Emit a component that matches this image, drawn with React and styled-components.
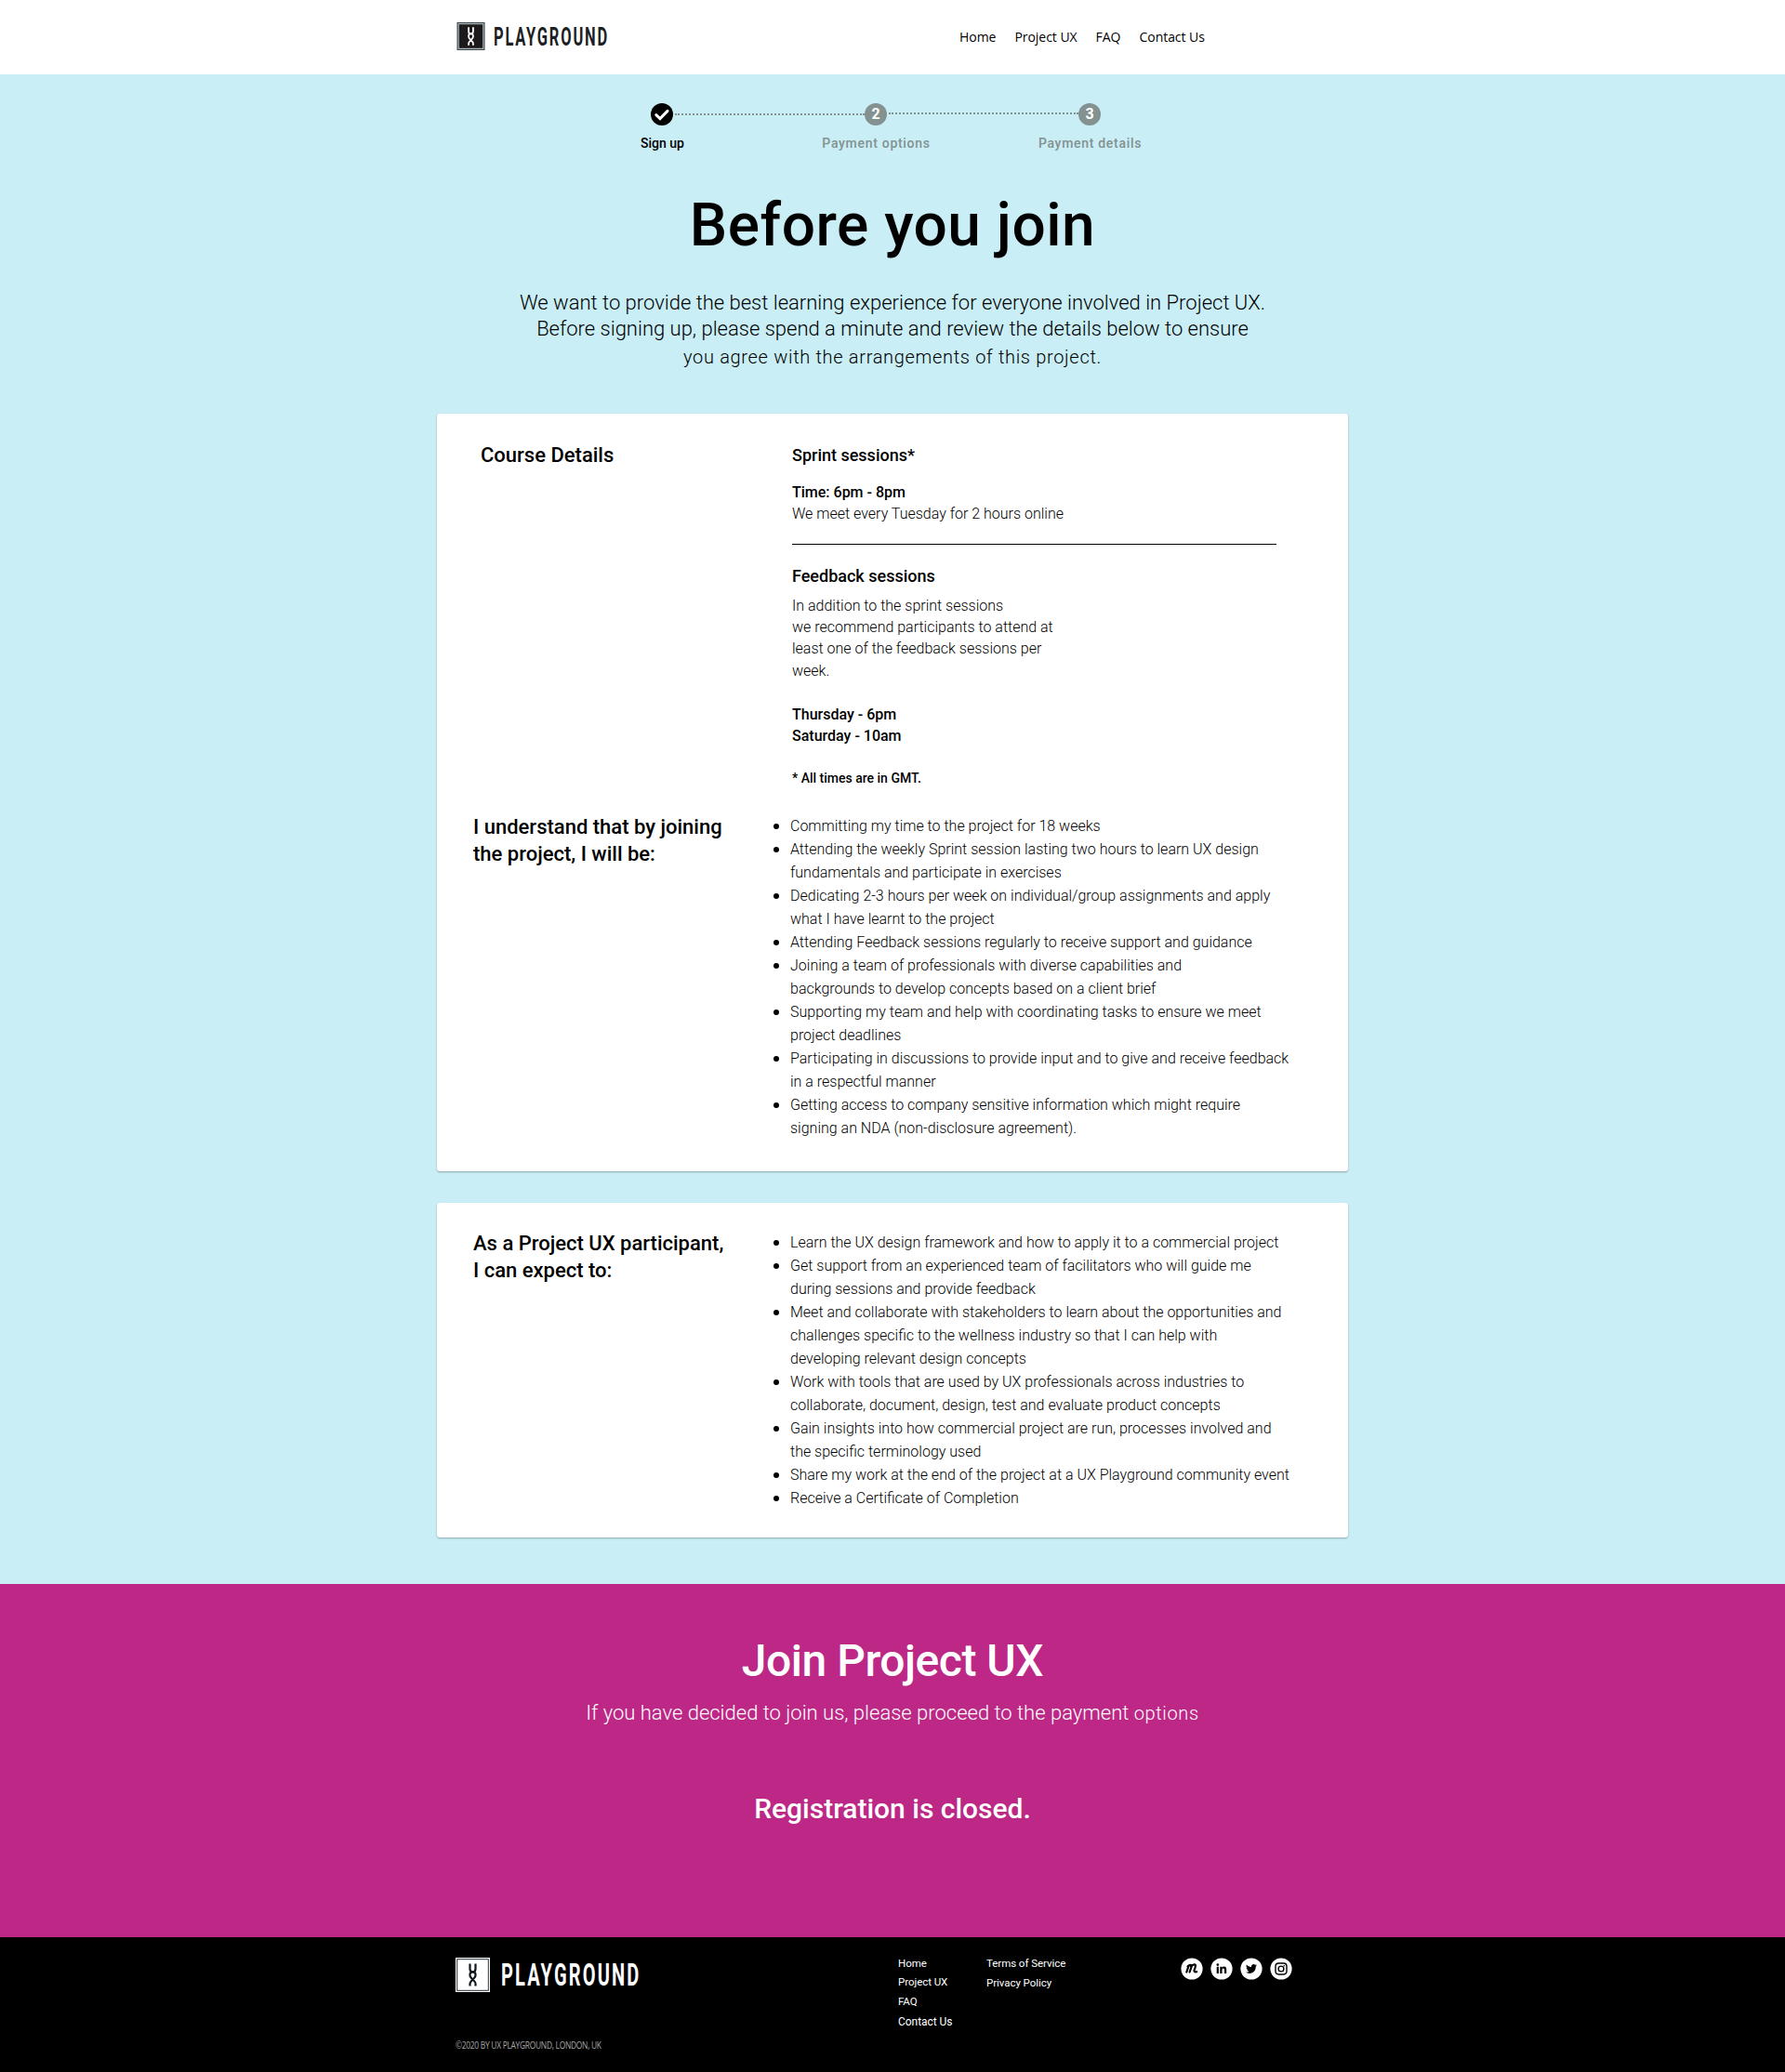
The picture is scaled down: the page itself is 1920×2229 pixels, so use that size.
import React from "react";
import styled, { createGlobalStyle } from "styled-components";

const Global = createGlobalStyle`
  *, *::before, *::after { box-sizing: border-box; }
  body { margin: 0; background: #fff; color: #000; font-family: Roboto, "Liberation Sans", sans-serif; }
  h1, h2, h3, p, ul { margin: 0; padding: 0; font-weight: inherit; }
  a { color: inherit; text-decoration: none; }
`;

const Header = styled.header`
  height: 80px;
  padding-left: 490px;
  display: flex;
  align-items: flex-start;
  background: #fff;
`;
const LogoSvg = styled.svg`
  display: block;
  flex: none;
`;
const HeaderLogo = styled.div`
  width: 542px;
  padding-top: 23px;
`;
const Nav = styled.nav`
  display: flex;
  gap: 20px;
  padding-top: 30px;
  font: 400 14px/20px "Open Sans", "Noto Sans", sans-serif;
  letter-spacing: -0.04px;
  white-space: nowrap;
`;

const Main = styled.main`
  height: 1624px;
  background: #c9eef6;
  display: flex;
  flex-direction: column;
  align-items: center;
  padding-top: 31px;
`;
const Track = styled.div`
  display: flex;
  width: 484px;
  margin-left: -36px;
`;
const Dot = styled.div`
  width: 24px;
  height: 24px;
  border-radius: 50%;
  background: ${(p) => (p.$done ? "#000" : "#839190")};
  color: #fff;
  font-size: 16px;
  line-height: 24px;
  font-weight: 700;
  text-align: center;
`;
const Dots = styled.div`
  width: 204px;
  height: 2px;
  margin: ${(p) => p.$top}px 0 0 2px;
  border-top: 2px dotted #839190;
`;
const Labels = styled.div`
  display: grid;
  grid-template-columns: repeat(3, 230px);
  margin: 9px 0 0 -35px;
`;
const Label = styled.div`
  text-align: center;
  font-size: 14px;
  font-weight: 500;
  line-height: 20px;
  letter-spacing: ${(p) => (p.$active ? 0 : 0.7)}px;
  color: ${(p) => (p.$active ? "#000" : "#839190")};
`;
const Title = styled.h1`
  margin-top: 39px;
  font-size: 64px;
  line-height: 80px;
  font-weight: 500;
  letter-spacing: 0.5px;
`;
const Intro = styled.p`
  margin-top: 29px;
  height: 133px;
  text-align: center;
  font-size: 22px;
  line-height: 28px;
  font-weight: 300;
  white-space: nowrap;
`;
const IntroTail = styled.span`
  display: block;
  margin-top: 1px;
  font-size: 20px;
  line-height: 30px;
  letter-spacing: 0.68px;
`;

const Card = styled.section`
  width: 980px;
  height: ${(p) => p.$h}px;
  margin-bottom: 34px;
  background: #fff;
  border-radius: 3px;
  box-shadow: 0 1px 2px rgba(0, 0, 0, 0.3);
`;
const Details = styled.div`
  display: grid;
  grid-template-columns: 335px 1fr;
  padding: 29px 0 0 47px;
  height: 430px;
`;
const CardHeading = styled.h2`
  padding-top: ${(p) => p.$pt || 0}px;
  font-size: 22px;
  line-height: 29px;
  font-weight: 500;
  white-space: nowrap;
`;
const DetailColumn = styled.div`
  padding-top: 4px;
`;
const SubHeading = styled.h3`
  font-size: 18px;
  line-height: 24px;
  font-weight: 500;
`;
const Strong = styled.p`
  margin-top: ${(p) => p.$mt}px;
  font-size: ${(p) => p.$size || 16}px;
  line-height: ${(p) => p.$lh || 23}px;
  font-weight: 500;
`;
const Body = styled.p`
  margin-top: ${(p) => p.$mt || 0}px;
  font-size: 16px;
  line-height: 23px;
  font-weight: 300;
`;
const Divider = styled.div`
  width: 521px;
  height: 1px;
  margin: 21px 0 22px;
  background: #000;
`;
const Terms = styled.div`
  display: grid;
  grid-template-columns: 323px 1fr;
  padding: ${(p) => p.$pt || 0}px 0 0 39px;
`;
const List = styled.ul`
  list-style: none;
  padding-top: 1px;
`;
const Item = styled.li`
  display: flex;
  gap: 12px;
  font-size: 16px;
  line-height: 25px;
  font-weight: 300;
  white-space: nowrap;
  &::before {
    content: "";
    flex: none;
    width: 6px;
    height: 6px;
    margin-top: 10px;
    border-radius: 50%;
    background: #000;
  }
`;

const Join = styled.section`
  height: 380px;
  padding-top: 53px;
  background: #bd2786;
  color: #fff;
  text-align: center;
`;
const JoinTitle = styled.h2`
  font-size: 48px;
  line-height: 60px;
  font-weight: 500;
  letter-spacing: -0.48px;
`;
const JoinText = styled.p`
  margin-top: 11px;
  font-size: 22px;
  line-height: 30px;
  font-weight: 300;
`;
const JoinTail = styled.span`
  font-size: 20px;
  letter-spacing: 0.65px;
`;
const Closed = styled.p`
  margin-top: 68px;
  font-size: 30px;
  line-height: 40px;
  font-weight: 500;
`;

const Footer = styled.footer`
  height: 145px;
  background: #000;
  color: #fff;
  display: flex;
  align-items: flex-start;
  padding: 22px 0 0 490px;
`;
const Brand = styled.div`
  width: 476px;
`;
const Copyright = styled.p`
  margin-top: 48px;
  font: 400 10px/16px "Open Sans", "Noto Sans", sans-serif;
  letter-spacing: -0.3px;
  color: #a9a9a9;
  transform: scaleX(0.837);
  transform-origin: left;
`;
const Links = styled.div`
  width: ${(p) => p.$w}px;
  display: flex;
  flex-direction: column;
`;
const FootLink = styled.a`
  font-size: ${(p) => p.$size || 11.5}px;
  line-height: 20px;
  letter-spacing: -0.05px;
  white-space: nowrap;
  margin-top: ${(p) => p.$mt || 0}px;
`;
const Social = styled.div`
  display: flex;
  gap: 8px;
`;

function Logo({ width, height, box, inner, mark, text, word }) {
  const s = box.size;
  return (
    <LogoSvg width={width} height={height} viewBox={`0 0 ${width} ${height}`}>
      <rect x={box.x} y={box.y} width={s} height={s} fill={box.outer} />
      <rect x={box.x + 1.2} y={box.y + 1.2} width={s - 2.4} height={s - 2.4} fill={inner.line} />
      <rect x={box.x + 2.2} y={box.y + 2.2} width={s - 4.4} height={s - 4.4} fill={inner.fill} />
      <g
        transform={`translate(${box.x + s / 2} ${box.y + s / 2}) scale(${s / 37})`}
        fill="none"
        stroke={mark}
        strokeWidth="2.2"
      >
        <path d="M-3 -12V-6.5Q-3 -3.2 0 -3.2T3 -6.5V-12" />
        <path d="M-3 12V9.5Q-3 7.8 0 5T3 .5V-.5Q3 -3.2 0 -3.2T-3 -.5V.5Q-3 2.2 0 5T3 9.5V12" />
      </g>
      <text
        x={word.x}
        y={word.y}
        fill={text}
        fontFamily="Roboto, sans-serif"
        fontWeight="700"
        fontSize={word.size}
        letterSpacing={word.size * 0.11}
        transform={`translate(${word.x} 0) scale(${word.scale} 1) translate(${-word.x} 0)`}
      >
        PLAYGROUND
      </text>
    </LogoSvg>
  );
}

const lines = (text) =>
  text.split("|").map((part, i) => (
    <React.Fragment key={i}>
      {i > 0 && <br />}
      {part}
    </React.Fragment>
  ));

const commitments = [
  "Committing my time to the project for 18 weeks",
  "Attending the weekly Sprint session lasting two hours to learn UX design|fundamentals and participate in exercises",
  "Dedicating 2-3 hours per week on individual/group assignments and apply|what I have learnt to the project",
  "Attending Feedback sessions regularly to receive support and guidance",
  "Joining a team of professionals with diverse capabilities and|backgrounds to develop concepts based on a client brief",
  "Supporting my team and help with coordinating tasks to ensure we meet|project deadlines",
  "Participating in discussions to provide input and to give and receive feedback|in a respectful manner",
  "Getting access to company sensitive information which might require|signing an NDA (non-disclosure agreement).",
];
const expectations = [
  "Learn the UX design framework and how to apply it to a commercial project",
  "Get support from an experienced team of facilitators who will guide me|during sessions and provide feedback",
  "Meet and collaborate with stakeholders to learn about the opportunities and|challenges specific to the wellness industry so that I can help with|developing relevant design concepts",
  "Work with tools that are used by UX professionals across industries to|collaborate, document, design, test and evaluate product concepts",
  "Gain insights into how commercial project are run, processes involved and|the specific terminology used",
  "Share my work at the end of the project at a UX Playground community event",
  "Receive a Certificate of Completion",
];

const Bullets = ({ items }) => (
  <List>
    {items.map((t) => (
      <Item key={t}>
        <span>{lines(t)}</span>
      </Item>
    ))}
  </List>
);

const Badge = ({ children }) => (
  <svg width="24" height="24" viewBox="0 0 24 24">
    <circle cx="12" cy="12" r="11.6" fill="#fff" />
    {children}
  </svg>
);

export default function App() {
  return (
    <>
      <Global />
      <Header>
        <HeaderLogo>
          <Logo
            width={180}
            height={34}
            box={{ x: 1.5, y: 1, size: 30, outer: "#3b444b" }}
            inner={{ line: "#c5d0d4", fill: "#1c1a1a" }}
            mark="#fff"
            text="#1c2023"
            word={{ x: 41, y: 26, size: 28, scale: 0.588 }}
          />
        </HeaderLogo>
        <Nav>
          <a>Home</a>
          <a>Project UX</a>
          <a>FAQ</a>
          <a>Contact Us</a>
        </Nav>
      </Header>
      <Main>
        <Track>
          <Dot $done>
            <svg width="24" height="24" viewBox="0 0 24 24">
              <path d="M5.8 12.6L10 16.6L18 8.4" fill="none" stroke="#fff" strokeWidth="3" strokeLinecap="round" />
            </svg>
          </Dot>
          <Dots $top={11} />
          <Dot>2</Dot>
          <Dots $top={10} />
          <Dot>3</Dot>
        </Track>
        <Labels>
          <Label $active>Sign up</Label>
          <Label>Payment options</Label>
          <Label>Payment details</Label>
        </Labels>
        <Title>Before you join</Title>
        <Intro>
          We want to provide the best learning experience for everyone involved in Project UX.
          <br />
          Before signing up, please spend a minute and review the details below to ensure
          <IntroTail>you agree with the arrangements of this project.</IntroTail>
        </Intro>
        <Card $h={815}>
          <Details>
            <CardHeading $pt={1}>Course Details</CardHeading>
            <DetailColumn>
              <SubHeading>Sprint sessions*</SubHeading>
              <Strong $mt={16}>Time: 6pm - 8pm</Strong>
              <Body>We meet every Tuesday for 2 hours online</Body>
              <Divider />
              <SubHeading>Feedback sessions</SubHeading>
              <Body $mt={8}>
                {lines("In addition to the sprint sessions|we recommend participants to attend at|least one of the feedback sessions per")}
              </Body>
              <Body $mt={1}>week.</Body>
              <Strong $mt={24}>{lines("Thursday - 6pm|Saturday - 10am")}</Strong>
              <Strong $mt={24} $size={14} $lh={20}>* All times are in GMT.</Strong>
            </DetailColumn>
          </Details>
          <Terms>
            <CardHeading>{lines("I understand that by joining|the project, I will be:")}</CardHeading>
            <Bullets items={commitments} />
          </Terms>
        </Card>
        <Card $h={360}>
          <Terms $pt={29}>
            <CardHeading>{lines("As a Project UX participant,|I can expect to:")}</CardHeading>
            <Bullets items={expectations} />
          </Terms>
        </Card>
      </Main>
      <Join>
        <JoinTitle>Join Project UX</JoinTitle>
        <JoinText>
          If you have decided to join us, please proceed to the payment <JoinTail>options</JoinTail>
        </JoinText>
        <Closed>Registration is closed.</Closed>
      </Join>
      <Footer>
        <Brand>
          <Logo
            width={210}
            height={38}
            box={{ x: 0, y: 0, size: 37, outer: "#fff" }}
            inner={{ line: "#27313a", fill: "#fff" }}
            mark="#10181c"
            text="#fff"
            word={{ x: 49, y: 30.5, size: 33, scale: 0.606 }}
          />
          <Copyright>©2020 BY UX PLAYGROUND, LONDON, UK</Copyright>
        </Brand>
        <Links $w={95}>
          <FootLink $mt={-4}>Home</FootLink>
          <FootLink>Project UX</FootLink>
          <FootLink $mt={1}>FAQ</FootLink>
          <FootLink $mt={2} $size={12}>Contact Us</FootLink>
        </Links>
        <Links $w={209}>
          <FootLink $mt={-4}>Terms of Service</FootLink>
          <FootLink $mt={1}>Privacy Policy</FootLink>
        </Links>
        <Social>
          <Badge>
            <path
              d="M6.3 15.5L8.6 8.8M9.6 15.5L12.2 8.2M7.5 9.5Q10 7 11.5 8.6M11 9.6Q14.5 6 16 8.4Q15.5 11.5 14.5 13.6Q14 15.8 17.2 15.2"
              fill="none" stroke="#000" strokeWidth="2.2" strokeLinecap="round" strokeLinejoin="round"
            />
          </Badge>
          <Badge>
            <circle cx="7.8" cy="7.6" r="1.3" />
            <path d="M6.7 9.8H8.9V17H6.7ZM10.3 9.8H12.4V10.8Q13.1 9.6 14.6 9.6Q17.2 9.6 17.2 12.8V17H15V13.3Q15 11.4 13.8 11.4Q12.5 11.4 12.5 13.2V17H10.3Z" />
          </Badge>
          <Badge>
            <path
              transform="translate(6 6) scale(.5)"
              d="M23.95 4.57a10 10 0 0 1-2.82.78 4.96 4.96 0 0 0 2.16-2.72c-.95.55-2 .95-3.13 1.18a4.92 4.92 0 0 0-8.38 4.48C7.69 8.1 4.07 6.13 1.64 3.16a4.9 4.9 0 0 0 1.52 6.57 4.9 4.9 0 0 1-2.23-.61v.06a4.92 4.92 0 0 0 3.95 4.83 5 5 0 0 1-2.21.08 4.94 4.94 0 0 0 4.6 3.42A9.87 9.87 0 0 1 0 19.54a13.99 13.99 0 0 0 7.55 2.21c9.05 0 14-7.5 14-13.98 0-.21 0-.42-.02-.63a9.94 9.94 0 0 0 2.46-2.55z"
            />
          </Badge>
          <Badge>
            <g fill="none" stroke="#000" strokeWidth="1.4">
              <rect x="6" y="6" width="12" height="12" rx="3.4" />
              <circle cx="12" cy="12" r="2.9" />
            </g>
            <circle cx="15.3" cy="8.7" r=".8" />
          </Badge>
        </Social>
      </Footer>
    </>
  );
}
